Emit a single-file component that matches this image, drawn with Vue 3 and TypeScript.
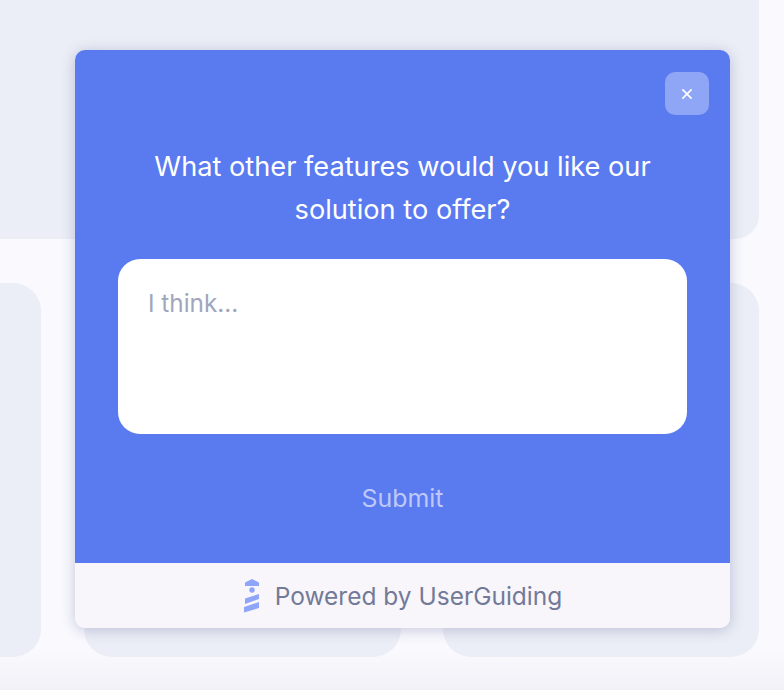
<script setup lang="ts">
const question = 'What other features would you like our solution to offer?'
</script>

<template>
  <div class="page">
    <div class="backdrop">
      <div class="top-card"></div>
      <div class="card-row">
        <div class="card card-left"></div>
        <div class="card card-mid"></div>
        <div class="card card-right"></div>
      </div>
    </div>
    <section class="modal">
      <div class="body">
        <button class="close" type="button" aria-label="Close">
          <svg width="12" height="12" viewBox="0 0 12 12" fill="none">
            <path d="M1.4 1.4L10.6 10.6M10.6 1.4L1.4 10.6" stroke="#fff" stroke-width="1.7" />
          </svg>
        </button>
        <h2 class="question">{{ question }}</h2>
        <div class="field">I think...</div>
        <div class="submit">Submit</div>
      </div>
      <footer class="footer">
        <svg class="logo" width="18" height="34" viewBox="0 0 18 34" fill="#8fa5f8">
          <path d="M9 0L16 3.5V7H2V3.5Z" />
          <circle cx="9" cy="11" r="2.7" />
          <path d="M2 19.5L16 15V20L2 25Z" />
          <path d="M1 28L16 23V29L1 33.5Z" />
        </svg>
        <span class="powered">Powered by UserGuiding</span>
      </footer>
    </section>
  </div>
</template>

<style scoped>
.page {
  position: relative;
  width: 784px;
  height: 690px;
  overflow: hidden;
  background: linear-gradient(180deg, #f9f9fe 0, #f9f9fe 650px, #f2f1f7 690px);
  font-family: Inter, "Noto Sans", sans-serif;
}
.backdrop {
  display: flex;
  flex-direction: column;
  gap: 44px;
  margin-left: -40px;
  width: 799px;
}
.top-card {
  height: 239px;
  background: #ebeef6;
  border-radius: 0 0 24px 24px;
}
.card-row {
  display: flex;
  gap: 43px;
}
.card {
  height: 374px;
  background: #ebeef6;
  border-radius: 28px;
}
.card-left {
  width: 81px;
  flex: none;
}
.card-mid {
  width: 317px;
  flex: none;
  margin-right: -1px;
}
.card-right {
  flex: 1;
}
.modal {
  position: absolute;
  left: 75px;
  top: 50px;
  width: 655px;
  height: 578px;
  display: flex;
  flex-direction: column;
  border-radius: 10px;
  overflow: hidden;
  box-shadow: 0 2px 14px rgba(60, 70, 130, 0.28);
}
.body {
  position: relative;
  flex: 1;
  background: #5a7af0;
  display: flex;
  flex-direction: column;
  align-items: center;
  padding: 95px 43px 0;
}
.close {
  position: absolute;
  top: 22px;
  right: 21px;
  width: 44px;
  height: 43px;
  display: flex;
  align-items: center;
  justify-content: center;
  padding: 0;
  border: 0;
  border-radius: 10px;
  background: #8fa5f5;
}
.question {
  margin: 0;
  width: 540px;
  color: #fff;
  font-size: 27.2px;
  font-weight: 400;
  line-height: 43px;
  text-align: center;
}
.field {
  margin-top: 28px;
  width: 100%;
  height: 175px;
  box-sizing: border-box;
  padding: 27px 30px;
  background: #fff;
  border-radius: 22px;
  color: #a0a6bd;
  font-size: 24.3px;
  line-height: 34px;
}
.submit {
  margin-top: 47px;
  color: #bcc9f9;
  font-size: 24.9px;
  line-height: 34px;
}
.footer {
  height: 65px;
  flex: none;
  display: flex;
  align-items: center;
  justify-content: center;
  gap: 14px;
  background: #f8f6fb;
}
.logo {
  flex: none;
}
.powered {
  color: #727a98;
  font-size: 24.5px;
  line-height: 34px;
}
</style>
